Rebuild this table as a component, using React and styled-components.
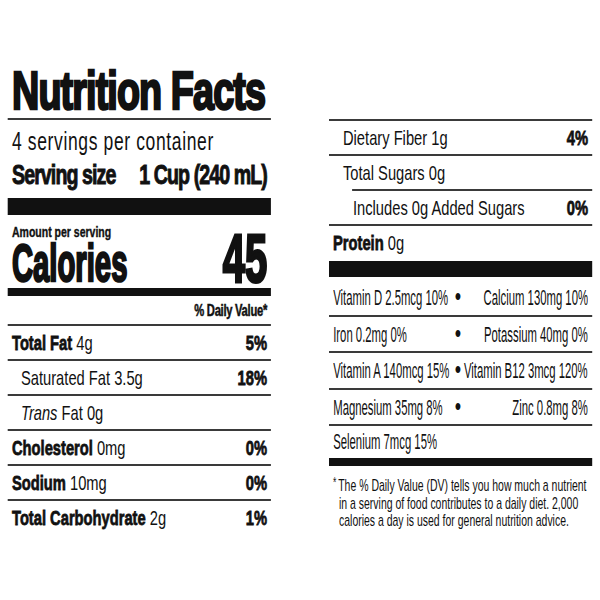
import React from "react";
import styled, { createGlobalStyle } from "styled-components";

// No condensed face is installed, so the whole label is laid out wide and squeezed
// horizontally; hx() converts an on-screen width into the unsqueezed layout width.
const SQUEEZE = 0.7;
const hx = (px) => `${(px / SQUEEZE).toFixed(2)}px`;

const ink = "#111";
const rule = "#3a3a3a";

const GlobalStyle = createGlobalStyle`
  html, body {
    margin: 0;
    padding: 0;
    background: #fff;
    overflow: hidden;
  }
  body {
    font-family: "Liberation Sans", Arial, sans-serif;
    color: ${ink};
  }
`;

const Page = styled.main`
  display: flex;
  align-items: flex-start;
  gap: ${hx(58)};
  padding-left: ${hx(8)};
  width: ${hx(592)};
  box-sizing: border-box;
  white-space: nowrap;
  transform: scaleX(${SQUEEZE});
  transform-origin: left top;
`;

const Column = styled.section`
  flex: none;
  width: ${hx(263)};
  min-width: 0;
  padding-top: ${(p) => p.$top}px;
  display: flex;
  flex-direction: column;
`;

const Squeezed = styled.span`
  display: inline-block;
  transform: scaleX(${(p) => p.$sx});
  transform-origin: ${(p) => p.$from || "left"} center;
`;

const Title = styled.h1`
  margin: 0;
  padding-left: ${hx(4)};
  font-size: 54px;
  line-height: 56px;
  font-weight: 700;
  letter-spacing: -1.3px;
  -webkit-text-stroke: 2.5px ${ink};
  border-bottom: 2px solid ${rule};
`;

const Servings = styled.div`
  margin-top: 6px;
  padding-left: ${hx(4)};
  font-size: 25px;
  line-height: 30px;
  letter-spacing: 0.9px;
`;

const ServingSize = styled.div`
  display: flex;
  justify-content: space-between;
  margin-top: 2px;
  padding: 0 ${hx(4)};
  font-size: 28px;
  line-height: 34px;
  font-weight: 700;
  letter-spacing: -1.3px;
  -webkit-text-stroke: 1px ${ink};
`;

const Bar = styled.div`
  height: ${(p) => p.$h}px;
  margin-top: ${(p) => p.$gap || 0}px;
  background: ${ink};
`;

const CaloriesRow = styled.div`
  display: flex;
  justify-content: space-between;
  align-items: flex-end;
  padding: 0 ${hx(4)};
  font-weight: 700;
`;

const AmountPer = styled.div`
  margin-top: 8px;
  font-size: 15px;
  line-height: 18px;
  -webkit-text-stroke: 0.4px ${ink};
`;

const CaloriesLabel = styled.div`
  font-size: 51px;
  line-height: 46px;
  -webkit-text-stroke: 2.5px ${ink};
`;

const CaloriesValue = styled.div`
  font-size: 68px;
  line-height: 57px;
  -webkit-text-stroke: 3px ${ink};
`;

const DailyHead = styled.div`
  margin-top: 5px;
  padding: 0 ${hx(4)} 3px;
  text-align: right;
  font-size: 16px;
  line-height: 20px;
  font-weight: 700;
  letter-spacing: -0.4px;
  -webkit-text-stroke: 0.5px ${ink};
`;

const Row = styled.div`
  display: flex;
  justify-content: space-between;
  margin-left: ${(p) => hx(p.$ruleIndent || 0)};
  padding: 0 ${hx(4)} 0 ${(p) => hx(p.$indent || 4)};
  border-top: 2px solid ${rule};
  font-size: 21px;
  line-height: 33px;
`;

const Name = styled.b`
  font-weight: 700;
  -webkit-text-stroke: 0.8px ${ink};
`;

const Percent = styled.span`
  font-weight: 700;
  -webkit-text-stroke: 0.8px ${ink};
`;

const VitaminRow = styled.div`
  display: flex;
  align-items: baseline;
  min-width: 0;
  padding: 0 ${hx(4)};
  border-bottom: ${(p) => (p.$open ? "none" : `2px solid ${rule}`)};
  font-size: 22px;
  line-height: ${(p) => p.$lh || 33.5}px;
`;

const VitaminCell = styled.span`
  flex: 1 1 0;
  min-width: 0;
  display: flex;
  justify-content: ${(p) => (p.$side === "right" ? "flex-end" : "flex-start")};
`;

const Dot = styled.span`
  flex: none;
  padding: 0 ${hx(6)} 0 ${hx(1)};
  font-size: 26px;
`;

const Footnote = styled.p`
  margin: 10px 0 0;
  padding-left: ${hx(10 / 0.88)};
  text-indent: ${hx(-6 / 0.88)};
  font-size: 17px;
  line-height: 17.5px;
  transform: scaleX(0.88);
  transform-origin: left top;
`;

const Star = styled.span`
  display: inline-block;
  font-size: 14px;
  line-height: 13px;
  vertical-align: 4px;
  margin-right: 3px;
  text-indent: 0;
`;

const vitamins = [
  ["Vitamin D 2.5mcg 10%", "Calcium 130mg 10%"],
  ["Iron 0.2mg 0%", "Potassium 40mg 0%"],
  ["Vitamin A 140mcg 15%", "Vitamin B12 3mcg 120%"],
  ["Magnesium 35mg 8%", "Zinc 0.8mg 8%"],
];

export default function App() {
  return (
    <>
      <GlobalStyle />
      <Page>
        <Column $top={62}>
          <Title>Nutrition Facts</Title>
          <Servings>4 servings per container</Servings>
          <ServingSize>
            <span>Serving size</span>
            <span>1 Cup (240 mL)</span>
          </ServingSize>
          <Bar $h={17} $gap={6} />
          <CaloriesRow>
            <div>
              <AmountPer>Amount per serving</AmountPer>
              <CaloriesLabel>
                <Squeezed $sx={0.82}>Calories</Squeezed>
              </CaloriesLabel>
            </div>
            <CaloriesValue>
              <Squeezed $sx={0.84} $from="right">45</Squeezed>
            </CaloriesValue>
          </CaloriesRow>
          <Bar $h={8} $gap={1} />
          <DailyHead>% Daily Value*</DailyHead>
          <Row>
            <span><Name>Total Fat</Name> 4g</span>
            <Percent>5%</Percent>
          </Row>
          <Row $indent={13}>
            <span>Saturated Fat 3.5g</span>
            <Percent>18%</Percent>
          </Row>
          <Row $indent={13}>
            <span><i>Trans</i> Fat 0g</span>
          </Row>
          <Row>
            <span><Name>Cholesterol</Name> 0mg</span>
            <Percent>0%</Percent>
          </Row>
          <Row>
            <span><Name>Sodium</Name> 10mg</span>
            <Percent>0%</Percent>
          </Row>
          <Row>
            <span><Name>Total Carbohydrate</Name> 2g</span>
            <Percent>1%</Percent>
          </Row>
        </Column>

        <Column $top={119}>
          <Row $indent={14}>
            <span>Dietary Fiber 1g</span>
            <Percent>4%</Percent>
          </Row>
          <Row $indent={14}>
            <span>Total Sugars 0g</span>
          </Row>
          <Row $ruleIndent={23} $indent={1}>
            <span>Includes 0g Added Sugars</span>
            <Percent>0%</Percent>
          </Row>
          <Row>
            <span><Name>Protein</Name> 0g</span>
          </Row>
          <Bar $h={16} $gap={2} />
          <div style={{ height: 3 }} />
          {vitamins.map(([left, right]) => (
            <VitaminRow key={left}>
              <VitaminCell>
                <Squeezed $sx={0.735}>{left}</Squeezed>
              </VitaminCell>
              <Dot>•</Dot>
              <VitaminCell $side="right">
                <Squeezed $sx={0.735} $from="right">{right}</Squeezed>
              </VitaminCell>
            </VitaminRow>
          ))}
          <VitaminRow $open $lh={32}>
            <Squeezed $sx={0.735}>Selenium 7mcg 15%</Squeezed>
          </VitaminRow>
          <Bar $h={8} />
          <Footnote>
            <Star>*</Star>The % Daily Value (DV) tells you how much a nutrient
            <br />
            in a serving of food contributes to a daily diet. 2,000
            <br />
            calories a day is used for general nutrition advice.
          </Footnote>
        </Column>
      </Page>
    </>
  );
}
